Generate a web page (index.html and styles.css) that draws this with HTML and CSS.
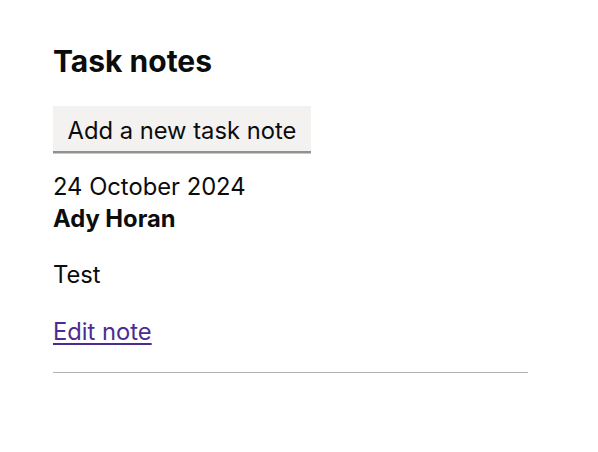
FILE: index.html
```html
<!DOCTYPE html>
<html lang="en">
<head>
<meta charset="utf-8">
<title>Task notes</title>
<link rel="stylesheet" href="styles.css">
</head>
<body>
<main class="page">
  <h2 class="heading">Task notes</h2>
  <button class="button" type="button">Add a new task note</button>
  <div class="note">
    <div class="note-meta">
      <div class="note-date">24 October 2024</div>
      <div class="note-author">Ady Horan</div>
    </div>
    <p class="note-body">Test</p>
    <p class="note-actions"><a class="link" href="#">Edit note</a></p>
    <hr class="section-break">
  </div>
</main>
</body>
</html>
```
FILE: styles.css
```css
html, body {
  margin: 0;
  padding: 0;
  background: #ffffff;
}

body {
  font-family: Inter, "Noto Sans", "Liberation Sans", sans-serif;
  color: #0b0c0c;
  -webkit-font-smoothing: antialiased;
}

.page {
  padding: 43px 0 0 53px;
  width: 475px;
}

.heading {
  margin: 0 0 25.5px;
  font-size: 30px;
  line-height: 37.5px;
  font-weight: 700;
}

.button {
  display: inline-block;
  margin: 0 0 20px;
  padding: 10.5px 12.5px 7px;
  border: 2.5px solid transparent;
  border-radius: 0;
  background: #f3f2f1;
  box-shadow: 0 2.5px 0 #929191;
  color: #0b0c0c;
  font-family: inherit;
  font-size: 23.75px;
  line-height: 1;
  font-weight: 400;
  cursor: pointer;
}

.note-meta {
  font-size: 23.75px;
  line-height: 31.25px;
}

.note-author {
  font-weight: 700;
}

.note-body,
.note-actions {
  margin: 25px 0 0;
  font-size: 23.75px;
  line-height: 31.25px;
}

.note-actions {
  margin-top: 26px;
}

.link {
  color: #4c2c92;
  text-decoration: underline;
  text-decoration-thickness: 1.5px;
  text-underline-offset: 2.5px;
}

.section-break {
  margin: 25px 0 0;
  border: 0;
  border-top: 1px solid #b1b4b6;
  height: 0;
}
```
